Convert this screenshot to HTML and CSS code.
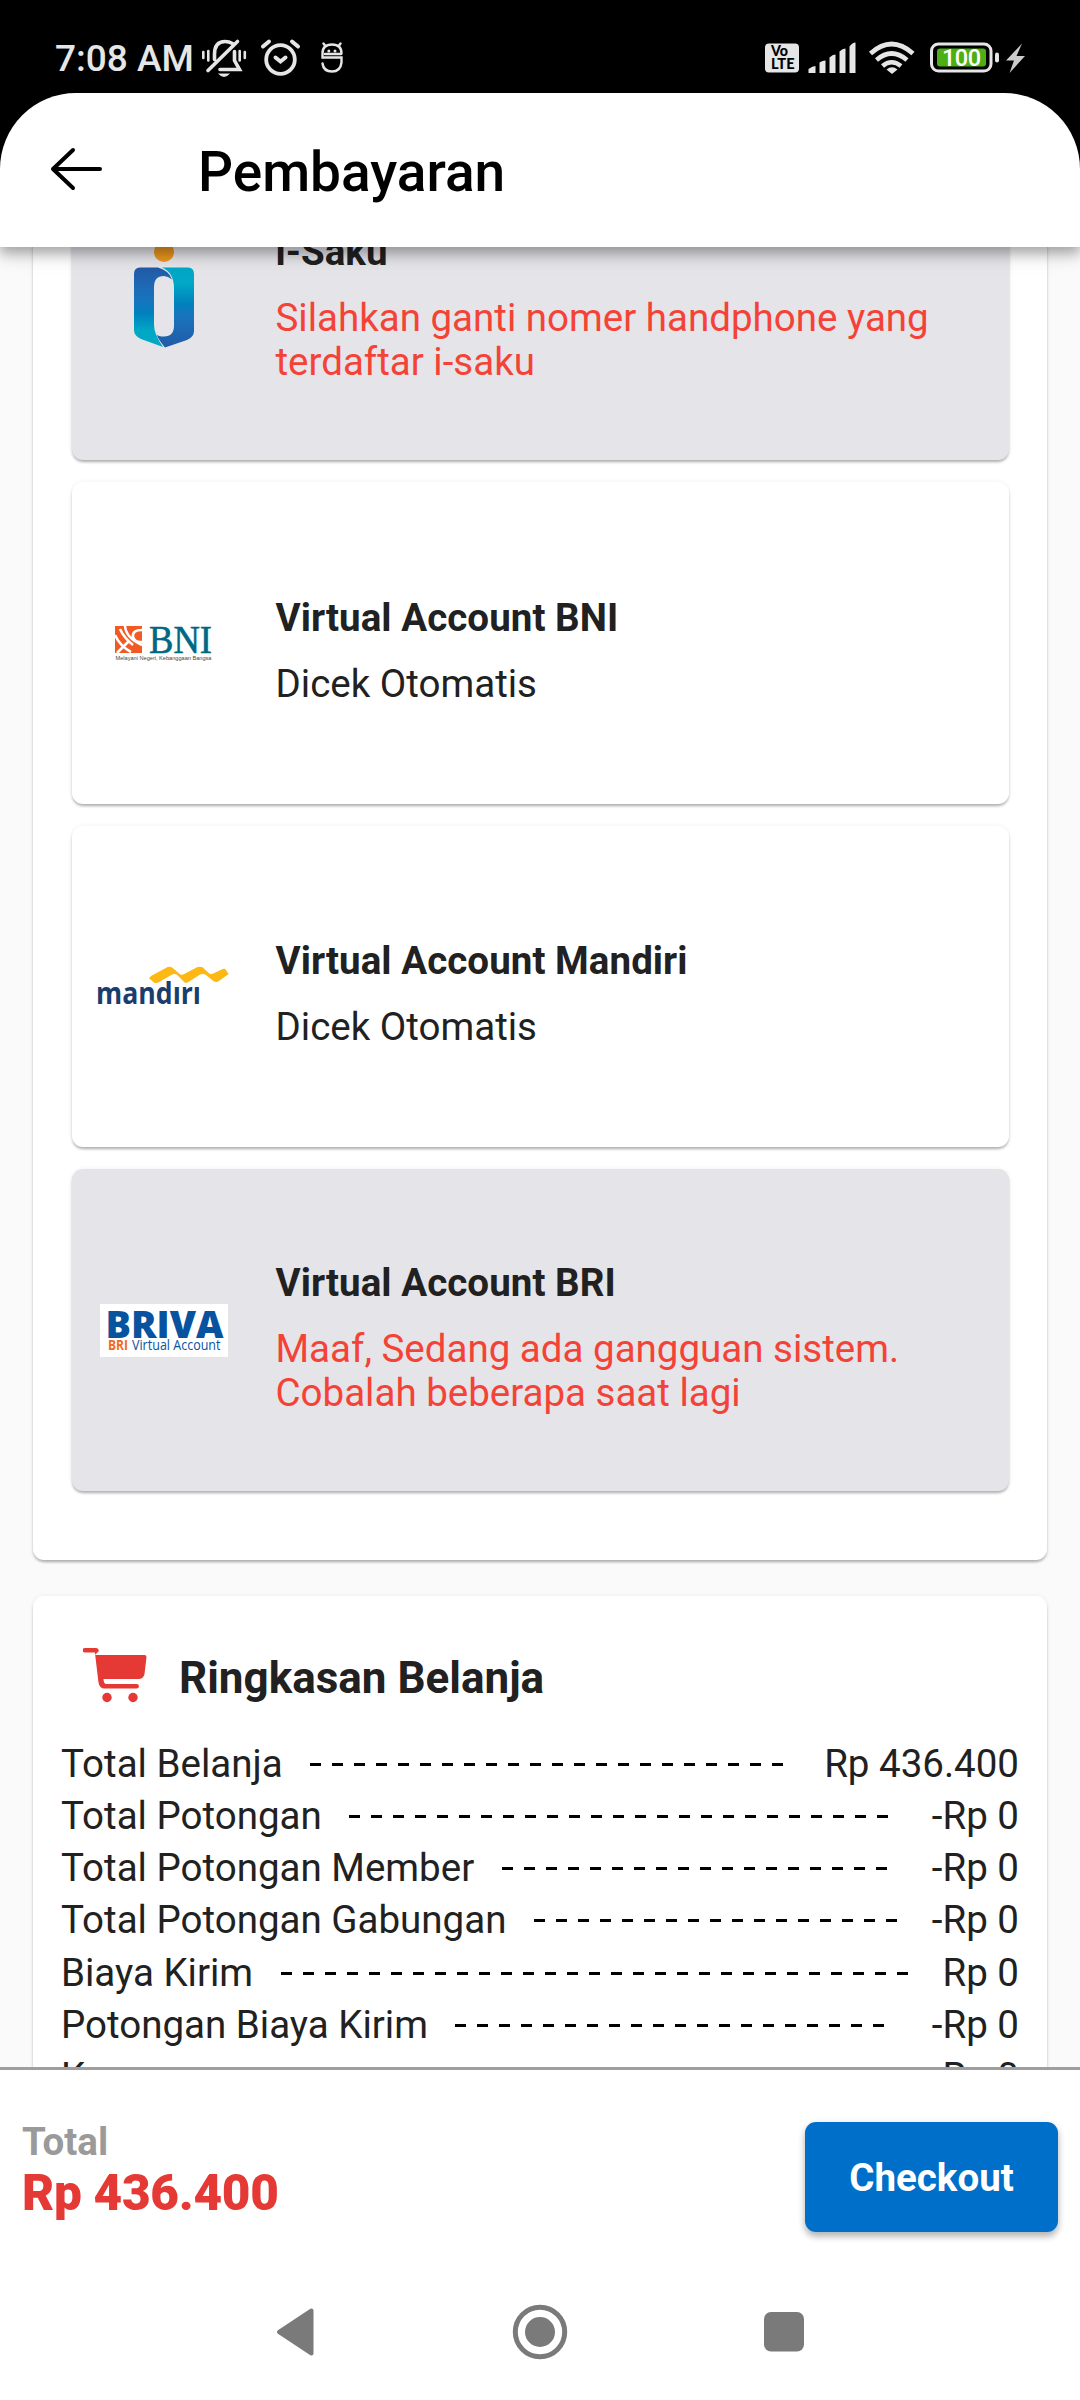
FILE: index.html
```
<!DOCTYPE html>
<html lang="id">
<head>
<meta charset="utf-8">
<title>Pembayaran</title>
<link rel="stylesheet" href="styles.css">
</head>
<body>
<div class="screen">
  <div class="statusbar">
    <span class="clock">7:08 AM</span>
    <svg class="status-left" width="150" height="48" viewBox="200 32.500 150 48" fill="none" stroke="#e6e6e6" stroke-linecap="round">
      <g stroke-width="2.600"><path d="M203.300 51.500v6M208.300 50.500v9.500M239.700 50.500v9.500M244.800 51.500v6"/></g>
      <path stroke-width="3.600" d="M214.500 59V54q0-13 10.500-13q4 0 7.500 2M234.500 51v9l5 9H220M208 70l29.500-29"/>
      <path fill="#e6e6e6" stroke="none" d="M218 73h12q-6 7-12 0z"/>
      <circle cx="280.500" cy="59" r="14.300" stroke-width="3.800"/>
      <path stroke-width="4" d="M263 46l6-5M298 46l-6-5M275.500 57l5 4l5-4"/>
      <path stroke-width="2.400" d="M341.500 53q0-9-9.500-9t-9.500 9v4h19v5q-1 9-9.500 9t-9.500-8M325 45l-1.500-2M339 45l1.500-2M325 53.500h16"/>
      <g fill="#e6e6e6" stroke="none"><circle cx="328.800" cy="50.500" r="1.500"/><circle cx="335" cy="50.500" r="1.500"/></g>
    </svg>
    <svg class="status-right" width="270" height="48" viewBox="762 32.500 270 48" fill="#e6e6e6">
      <rect x="765" y="43" width="34" height="29" rx="4"/>
      <g fill="#000" class="volte"><text x="771" y="55.700" textLength="17" lengthAdjust="spacingAndGlyphs">Vo</text><text x="771" y="68.500" textLength="23.500" lengthAdjust="spacingAndGlyphs">LTE</text></g>
      <path d="M808.500 72.500v-4q4-3 7-3v7zM819.500 72.500V62q3-2 6-2v12.500zM829.500 72.500V57q3-3 6-3v18.500zM839.500 72.500V51q3-3 6-3v24.500zM849.500 72.500V46q3-4 6-4v30.500z"/>
      <g fill="none" stroke="#e6e6e6" stroke-width="4.600"><path d="M870.500 53q21-19 42.500 0M876.500 59.500q15-13 30.500 0M882.500 65.500q9-7.500 18.500 0"/></g>
      <path d="M886.500 69q5.500-4.500 11 0l-5.500 4.500z"/>
      <rect x="931.500" y="43.500" width="59.500" height="27" rx="7" fill="none" stroke="#e6e6e6" stroke-width="3"/>
      <rect x="937" y="48" width="49" height="18" rx="3" fill="#4caf14"/>
      <text class="battery" x="942" y="65.700" textLength="39">100</text>
      <rect x="995" y="52" width="4" height="10" rx="2"/>
      <path fill="#ccc" d="M1022 43l-16 17h8l-4.500 12.500 15.500-17h-8.500z"/>
    </svg>
  </div>
  <header class="appbar">
    <svg class="back" width="54" height="46" viewBox="0 0 54 46" fill="none" stroke="#000" stroke-width="4" stroke-linecap="round" stroke-linejoin="round"><path d="M50 23H3M23 4L3 23l20 19"/></svg>
    <h1>Pembayaran</h1>
  </header>
  <main class="content">
    <section class="card methods">
      <div class="method off isaku">
        <div class="logo">
          <svg width="130" height="110" viewBox="98 240 130 110">
            <defs>
              <linearGradient id="a" x1="0" y1="0" x2="0" y2="1"><stop offset="0" stop-color="#235aa6"/><stop offset=".4" stop-color="#1974bd"/><stop offset=".58" stop-color="#0081bd"/><stop offset=".8" stop-color="#00a8c6"/></linearGradient>
              <linearGradient id="b" x1="0" y1="1" x2="0" y2="0"><stop offset="0" stop-color="#235aa6"/><stop offset=".4" stop-color="#1974bd"/><stop offset=".55" stop-color="#0081bd"/><stop offset=".8" stop-color="#00a8c6"/></linearGradient>
            </defs>
            <circle cx="163" cy="252" r="10" fill="#ec971f"/>
            <path fill="url(#a)" d="M139 267.500h18q11 3 14 12q-4-3.500-8-3.500q-10 0-10 11v38q0 9 9 22l-22-8q-7-3-7-9v-56q0-6.500 6-6.500z"/>
            <path fill="url(#b)" d="M161 267.500h26q6 0 6 6.500v57q0 6-7 9l-22 7.500q-6-7-8.500-13q2 2 7.500 2q10 0 10-11v-37q0-16-12-21z"/>
          </svg>
        </div>
        <div class="info"><h2>i-Saku</h2><p>Silahkan ganti nomer handphone yang<br>terdaftar i-saku</p></div>
      </div>
      <div class="method">
        <div class="logo">
          <svg class="bni" width="130" height="56" viewBox="98 614 130 56">
            <rect x="114" y="625" width="27" height="27" fill="#f15a24"/>
            <path fill="none" stroke="#fff" stroke-width="2.600" d="M114 634q5 11 16 17M124 625q1 12 17 19M141 629q-10 0-9 7q2 6 9 5M116 652l12-12M119 628q4 9 13 16"/>
            <text class="bni-name" x="148" y="651.500" textLength="63" lengthAdjust="spacingAndGlyphs">BNI</text>
            <text class="bni-tag" x="114.500" y="658.500" textLength="96" lengthAdjust="spacingAndGlyphs">Melayani Negeri, Kebanggaan Bangsa</text>
          </svg>
        </div>
        <div class="info"><h2>Virtual Account BNI</h2><p>Dicek Otomatis</p></div>
      </div>
      <div class="method">
        <div class="logo">
          <svg class="mandiri" width="140" height="60" viewBox="93 957 140 60">
            <text x="95" y="1005" textLength="105" lengthAdjust="spacingAndGlyphs">mandırı</text>
            <path fill="#fdb813" d="M148 979.300l2-2.300 16.700-9q3-.700 5 1l7.600 6.500q1.700.600 3.400-.200L196 968.200q3-1 5.700.100l6.300 6q1.500 1.200 3.700.400L221.700 970q1.300-.600 2.600 0l3.400 5-10.500 7.500q-2 1-4.500-.200L205 976q-3-2-6.700 0l-11.600 7.500q-1.700.800-3.400-.200l-7-7.300q-3-2-6.300.300l-12.300 7q-2 1-4.400.500z"/>
          </svg>
        </div>
        <div class="info"><h2>Virtual Account Mandiri</h2><p>Dicek Otomatis</p></div>
      </div>
      <div class="method off">
        <div class="logo">
          <svg class="briva" width="128" height="53" viewBox="99 1304 128 53">
            <rect x="99" y="1304" width="128" height="53" fill="#fff"/>
            <text class="briva-name" x="104.500" y="1337.500" textLength="118" lengthAdjust="spacingAndGlyphs">BRIVA</text>
            <text class="briva-bri" x="107" y="1349.500" textLength="20" lengthAdjust="spacingAndGlyphs">BRI</text>
            <text class="briva-va" x="131" y="1349.500" textLength="88.500" lengthAdjust="spacingAndGlyphs">Virtual Account</text>
          </svg>
        </div>
        <div class="info"><h2>Virtual Account BRI</h2><p>Maaf, Sedang ada gangguan sistem.<br>Cobalah beberapa saat lagi</p></div>
      </div>
    </section>
    <section class="card summary">
      <div class="summary-head">
        <svg width="64" height="58" viewBox="83 1648 64 58" fill="#e53935">
          <path d="M95 1655h49.500q2 0 2 2l-2 17q-1 5-6 5h-35q0 5 3 5h30q2.500 0 2.500 2.250t-2.500 2.250h-32q-5 0-6-6l-3.600-30h-10q-2.400 0-2.400-2.250t2.400-2.250h11q2.500 0 3 3z"/>
          <circle cx="107" cy="1697.500" r="4.700"/><circle cx="133" cy="1697.500" r="4.700"/>
        </svg>
        <h2>Ringkasan Belanja</h2>
      </div>
      <div class="row"><span>Total Belanja</span><i style="width:484px"></i><b>Rp 436.400</b></div>
      <div class="row"><span>Total Potongan</span><i style="width:550px"></i><b>-Rp 0</b></div>
      <div class="row"><span>Total Potongan Member</span><i style="width:396px"></i><b>-Rp 0</b></div>
      <div class="row"><span>Total Potongan Gabungan</span><i style="width:374px"></i><b>-Rp 0</b></div>
      <div class="row"><span>Biaya Kirim</span><i style="width:638px"></i><b>Rp 0</b></div>
      <div class="row"><span>Potongan Biaya Kirim</span><i style="width:440px"></i><b>-Rp 0</b></div>
      <div class="row"><span>K</span><b>Rp 0</b></div>
    </section>
  </main>
  <footer class="checkout">
    <div class="total"><span>Total</span><strong>Rp 436.400</strong></div>
    <button type="button">Checkout</button>
  </footer>
  <nav class="navbar">
    <svg width="1080" height="137" viewBox="0 2263 1080 137" fill="#7a7a7a">
      <path stroke="#7a7a7a" stroke-width="4" stroke-linejoin="round" d="M279 2332l32.500-21.500v43z"/>
      <circle cx="540" cy="2332" r="24.700" fill="none" stroke="#7a7a7a" stroke-width="5"/><circle cx="540" cy="2332" r="15"/>
      <rect x="764" y="2312" width="40" height="39.500" rx="7"/>
    </svg>
  </nav>
</div>
</body>
</html>
```
FILE: styles.css
```
* { box-sizing: border-box; margin: 0; padding: 0; }
body { background: #000; font-family: Roboto, "Liberation Sans", sans-serif; color: #212121; }
.screen { width: 1080px; height: 2400px; display: flex; flex-direction: column; overflow: hidden; }
.statusbar { height: 93px; flex: none; display: flex; align-items: center; padding: 20px 48px 0 55px; color: #e6e6e6; }
.clock { font-size: 37px; font-weight: 500; line-height: 40px; width: 145px; white-space: nowrap; padding-top: 4px; }
.status-right { margin-left: auto; }
.volte { font: 900 15px Lato, sans-serif; }
.battery { font: 500 23.5px Roboto, sans-serif; fill: #fff; }
.appbar { height: 154px; flex: none; background: #fff; border-radius: 76px 76px 0 0; display: flex; align-items: center; padding: 0 50px; gap: 94px; position: relative; z-index: 1; box-shadow: 0 5px 11px rgba(0,0,0,.22), 0 11px 14px rgba(0,0,0,.1), 0 3px 28px rgba(0,0,0,.1); }
.back { margin-top: -2px; }
.appbar h1 { font-size: 55px; font-weight: 500; color: #000; line-height: 64px; padding-top: 3px; }
.content { height: 1820px; flex: none; background: #fafafa; overflow: hidden; padding: 0 33px; display: flex; flex-direction: column; justify-content: flex-start; gap: 36px; }
.card { background: #fff; border-radius: 11px; box-shadow: 0 3px 3px -1px rgba(0,0,0,.2), 0 2px 3px rgba(0,0,0,.12), 0 0 5px rgba(0,0,0,.06); flex: none; }
.methods { margin-top: -120px; height: 1433px; padding: 11px 38.5px 0; display: flex; flex-direction: column; gap: 22px; }
.method { height: 321.75px; flex: none; border-radius: 11px; background: #fff; display: flex; align-items: center; box-shadow: 0 3px 3px -1px rgba(0,0,0,.2), 0 2px 3px rgba(0,0,0,.12), 0 0 5px rgba(0,0,0,.06); }
.off { background: #e5e4e9; }
.logo { width: 184px; flex: none; display: flex; justify-content: center; }
.isaku .logo { padding-bottom: 8px; }
.info { padding: 16px 0 0 20px; font-size: 38.5px; line-height: 44px; }
.info h2 { font-size: 38.5px; font-weight: 700; line-height: 44px; margin-bottom: 22px; white-space: nowrap; letter-spacing: .05px; }
.off p { color: #f44336; }
.bni-name { font: 400 40px "Liberation Serif", serif; fill: #006885; stroke: #006885; stroke-width: .6; }
.bni-tag { font: 400 6px "Liberation Sans", sans-serif; fill: #444; }
.mandiri text { font: 700 31px "Open Sans", sans-serif; fill: #1a3d6e; }
.briva-name { font: 800 37px "Open Sans", sans-serif; fill: #0753a0; }
.briva-bri { font: 700 14px "Open Sans", sans-serif; fill: #f26a21; }
.briva-va { font: 400 14.5px "Open Sans", sans-serif; fill: #0753a0; }
.summary { height: 700px; padding: 52px 28px 0; }
.summary-head { display: flex; align-items: center; gap: 32px; padding-left: 22px; height: 58px; margin-bottom: 31.5px; }
.summary-head h2 { font-size: 44px; font-weight: 700; line-height: 52px; padding-top: 1px; }
.row { height: 52.25px; display: flex; font-size: 38.5px; line-height: 52.25px; white-space: nowrap; }
.row i { margin-left: 27.5px; height: 3px; margin-top: 25px; background: repeating-linear-gradient(90deg, #000 0 11px, transparent 11px 22px); }
.row b { font-weight: 400; margin-left: auto; }
.checkout { height: 196px; flex: none; background: #fff; border-top: 3px solid #9e9e9e; display: flex; justify-content: space-between; padding: 52px 22px 0; }
.total { display: flex; flex-direction: column; margin-top: -3px; font-weight: 700; }
.total span { font-size: 38.5px; line-height: 45px; color: #9a9a9a; }
.total strong { font-size: 49.5px; line-height: 58px; color: #e53935; letter-spacing: -.3px; }
.checkout button { width: 253px; height: 110px; border: 0; border-radius: 11px; background: #006fc9; color: #fff; font: 700 38.5px Roboto, sans-serif; box-shadow: 0 5px 6px rgba(0,0,0,.22), 0 2px 8px rgba(0,0,0,.12); }
.navbar { height: 137px; flex: none; background: #fff; }
.navbar svg { display: block; }
```
